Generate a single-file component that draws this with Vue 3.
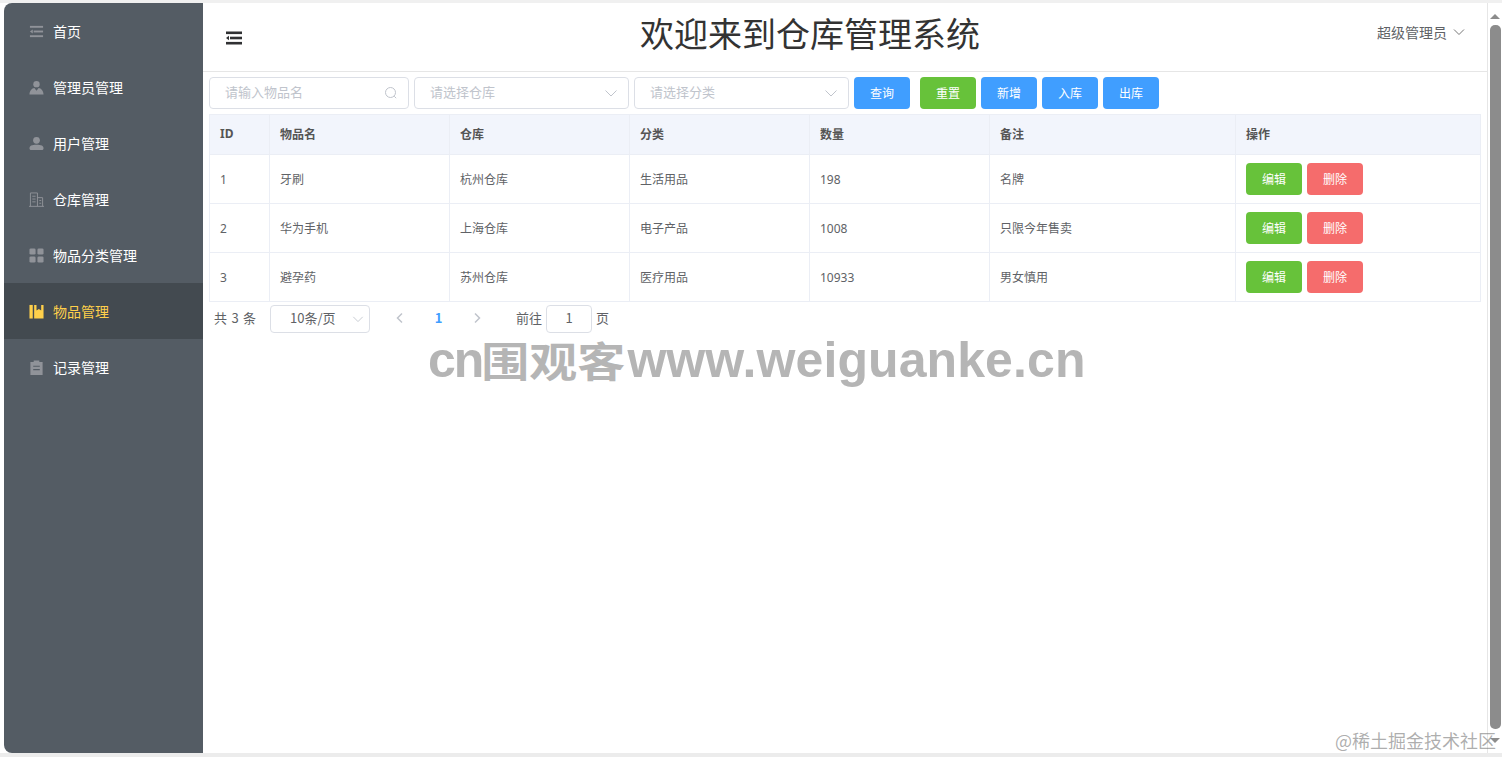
<script setup>
const menu = [
  { label: '首页', icon: 'fold' },
  { label: '管理员管理', icon: 'admin' },
  { label: '用户管理', icon: 'user' },
  { label: '仓库管理', icon: 'building' },
  { label: '物品分类管理', icon: 'grid' },
  { label: '物品管理', icon: 'goods', active: true },
  { label: '记录管理', icon: 'order' }
]
const columns = ['ID', '物品名', '仓库', '分类', '数量', '备注', '操作']
const rows = [
  [1, '牙刷', '杭州仓库', '生活用品', 198, '名牌'],
  [2, '华为手机', '上海仓库', '电子产品', 1008, '只限今年售卖'],
  [3, '避孕药', '苏州仓库', '医疗用品', 10933, '男女慎用']
]
const toolbar = [
  { text: '查询', cls: 'blue gap' },
  { text: '重置', cls: 'green' },
  { text: '新增', cls: 'blue' },
  { text: '入库', cls: 'blue' },
  { text: '出库', cls: 'blue' }
]
</script>

<template>
  <div class="page">
    <div class="window">
      <aside class="side">
        <div v-for="m in menu" :key="m.label" class="item" :class="{ active: m.active }">
          <svg class="ic" viewBox="0 0 16 16" fill="currentColor">
            <template v-if="m.icon === 'fold'">
              <rect x="1" y="2" width="14" height="2" />
              <rect x="5" y="7" width="10" height="2" />
              <rect x="1" y="12" width="14" height="2" />
              <path d="M1 8l3-2.200v4.400z" />
            </template>
            <template v-else-if="m.icon === 'admin'">
              <circle cx="8" cy="4.400" r="3.400" />
              <path d="M.5 15.500c0-3.600 2.600-6.700 5.200-6.900L8 11.500l2.300-2.900c2.600.2 5.200 3.300 5.200 6.900z" />
            </template>
            <template v-else-if="m.icon === 'user'">
              <circle cx="8" cy="4.600" r="3.600" />
              <path d="M.5 13c0-2.600 2.400-3.800 7.500-3.800s7.500 1.200 7.500 3.800c0 1.400-.8 2-2 2H2.500c-1.200 0-2-.6-2-2z" />
            </template>
            <template v-else-if="m.icon === 'building'">
              <path fill="none" stroke="currentColor" stroke-width="1" d="M0 15.300h16M1.500 15.300V1h7.500v14.300M9 6h5.500v9.300M3.500 4.500h3.500M3.500 7.500h3.500M3.500 10.500h3.500M11 9h2M11 12h2" />
            </template>
            <template v-else-if="m.icon === 'grid'">
              <rect x="0.500" y="0.500" width="6.500" height="6.500" rx="1.400" />
              <rect x="9" y="0.500" width="6.500" height="6.500" rx="1.400" />
              <rect x="0.500" y="9" width="6.500" height="6.500" rx="1.400" />
              <rect x="9" y="9" width="6.500" height="6.500" rx="1.400" />
            </template>
            <template v-else-if="m.icon === 'goods'">
              <rect x="0.500" y="1" width="3.500" height="14.500" />
              <path d="M5.500 1H8v6l2.500-1.800L13 7V1h2.500v14.500h-10z" />
            </template>
            <template v-else>
              <path fill-rule="evenodd" d="M5 0.500h6v1.500h3.500v14h-13V2H5zM4.500 6v1.300h7V6zM4.500 9.500v1.300h7V9.500z" />
            </template>
          </svg>
          <span>{{ m.label }}</span>
        </div>
      </aside>

      <main class="main">
        <header class="head">
          <svg class="fold" viewBox="0 0 16 14" fill="currentColor">
            <rect x="0" y="0.500" width="16" height="2.600" />
            <rect x="4" y="5.700" width="12" height="2.600" />
            <rect x="0" y="10.900" width="16" height="2.600" />
            <path d="M0 7l3-2.200v4.400z" />
          </svg>
          <h1 class="title">欢迎来到仓库管理系统</h1>
          <div class="userbox">
            <span>超级管理员</span>
            <svg class="chev" viewBox="0 0 12 12" fill="none" stroke="currentColor"><path d="M1 3.500l5 5 5-5" /></svg>
          </div>
        </header>

        <section class="body">
          <div class="tools">
            <div class="field w200">
              <span class="ph">请输入物品名</span>
              <svg class="sfx" viewBox="0 0 14 14" fill="none" stroke="currentColor"><circle cx="6.500" cy="6.500" r="5" /><path d="M10.200 10.200l2 2" /></svg>
            </div>
            <div class="field w215">
              <span class="ph">请选择仓库</span>
              <svg class="sfx" viewBox="0 0 14 14" fill="none" stroke="currentColor"><path d="M1.500 4.500l5.500 5.500 5.500-5.500" /></svg>
            </div>
            <div class="field w215">
              <span class="ph">请选择分类</span>
              <svg class="sfx" viewBox="0 0 14 14" fill="none" stroke="currentColor"><path d="M1.500 4.500l5.500 5.500 5.500-5.500" /></svg>
            </div>
            <button v-for="b in toolbar" :key="b.text" class="btn" :class="b.cls">{{ b.text }}</button>
          </div>

          <table class="tbl">
            <colgroup>
              <col class="c60" /><col class="c180" /><col class="c180" /><col class="c180" /><col class="c180" /><col class="c246" /><col />
            </colgroup>
            <thead>
              <tr><th v-for="c in columns" :key="c">{{ c }}</th></tr>
            </thead>
            <tbody>
              <tr v-for="r in rows" :key="r[0]">
                <td v-for="(v, i) in r" :key="i">{{ v }}</td>
                <td>
                  <div class="ops">
                    <button class="btn green">编辑</button>
                    <button class="btn red">删除</button>
                  </div>
                </td>
              </tr>
            </tbody>
          </table>

          <div class="pager">
            <span class="total">共 3 条</span>
            <div class="size">
              <span>10条/页</span>
              <svg class="sfx small" viewBox="0 0 14 14" fill="none" stroke="currentColor"><path d="M1.500 4.500l5.500 5.500 5.500-5.500" /></svg>
            </div>
            <svg class="arrow prev" viewBox="0 0 10 12" fill="none" stroke="currentColor" stroke-width="1.500"><path d="M7 1.500L2.500 6 7 10.500" /></svg>
            <span class="num">1</span>
            <svg class="arrow next" viewBox="0 0 10 12" fill="none" stroke="currentColor" stroke-width="1.500"><path d="M3 1.500L7.500 6 3 10.500" /></svg>
            <span class="goto">前往</span>
            <div class="jump">1</div>
            <span class="goto2">页</span>
          </div>
        </section>

        <div class="mark"><span class="m1 m0">cn</span><span class="m2">围观客</span><span class="m1">www.weiguanke.cn</span></div>
      </main>

      <div class="scroll">
        <i class="up"></i>
        <div class="thumb"></div>
        <i class="down"></i>
      </div>
    </div>
    <div class="juejin">@稀土掘金技术社区</div>
  </div>
</template>

<style>
html, body { margin: 0; background: #fff; overflow: hidden; }
</style>

<style scoped>
.page {
  position: relative;
  height: 757px;
  box-sizing: border-box;
  padding: 3px 1px 4px 4px;
  background: linear-gradient(#f0f0f0 0 3px, #fff 3px 753px, #ececec 753px);
  font-family: "Noto Sans CJK SC", "Liberation Sans", sans-serif;
  color: #606266;
}
.window { display: flex; height: 750px; background: #fff; border-radius: 8px 0 8px 8px; overflow: hidden; }
.side { width: 199px; flex: none; background: #545c64; }
.item {
  height: 56px;
  display: flex;
  align-items: center;
  padding-left: 25px;
  gap: 9px;
  font-size: 14px;
  color: #fff;
}
.item .ic { width: 15px; height: 15px; color: #909399; flex: none; }
.item.active { background: #434a50; color: #ffd04b; }
.item.active .ic { color: #ffd04b; }

.main { position: relative; width: 1284px; flex: none; display: flex; flex-direction: column; }
.head {
  height: 68px;
  flex: none;
  border-bottom: 1px solid #e6e6e6;
  display: flex;
  align-items: center;
}
.fold { width: 16px; height: 14px; margin: 2px 0 0 23px; color: #303133; flex: none; }
.title { margin: 0 0 7px 398px; font-size: 34px; font-weight: 400; line-height: 1.2; color: #333; white-space: nowrap; }
.userbox { display: flex; align-items: center; gap: 6px; font-size: 14px; margin: 0 22px 10px auto; color: #606266; line-height: 20px; }
.chev { width: 12px; height: 12px; color: #777; }

.body { padding: 5px 6px 0 6px; flex: 1; }
.tools { display: flex; gap: 5px; height: 32px; }
.field {
  height: 32px;
  box-sizing: border-box;
  border: 1px solid #dcdfe6;
  border-radius: 4px;
  padding: 0 10px 0 15px;
  display: flex;
  align-items: center;
  justify-content: space-between;
  flex: none;
}
.w200 { width: 200px; }
.w215 { width: 215px; }
.ph { font-size: 13px; color: #c0c4cc; line-height: 18px; margin-top: -3px; }
.sfx { width: 14px; height: 14px; color: #c0c4cc; }
.sfx.small { width: 12px; height: 12px; }
.btn {
  width: 56px;
  height: 32px;
  padding: 0 0 2px;
  border: 0;
  border-radius: 4px;
  color: #fff;
  font-size: 12px;
  font-family: inherit;
  flex: none;
}
.blue { background: #409eff; }
.green { background: #67c23a; }
.red { background: #f56c6c; }
.gap { margin-right: 5px; }

.tbl {
  width: 1272px;
  margin-top: 5px;
  table-layout: fixed;
  border-collapse: collapse;
  font-size: 12px;
  font-family: "Noto Sans", "Noto Sans CJK SC", sans-serif;
  border: 1px solid #ebeef5;
}
.c60 { width: 60px; }
.c180 { width: 180px; }
.c246 { width: 246px; }
th, td { border: 1px solid #ebeef5; padding: 0 10px; text-align: left; }
th { height: 37px; padding-bottom: 2px; background: #f2f5fc; font-weight: 700; color: #555; }
td { height: 48px; color: #606266; }
.ops { display: flex; gap: 5px; }
.ops .btn { display: block; font-family: "Noto Sans CJK SC", sans-serif; }

.pager { display: flex; align-items: center; height: 28px; margin-top: 3px; font-size: 13px; }
.pager > span, .size > span, .jump { line-height: 18px; padding-bottom: 3px; }
.total { margin-left: 5px; width: 56px; word-spacing: 1.500px; }
.size {
  width: 100px;
  height: 28px;
  box-sizing: border-box;
  border: 1px solid #dcdfe6;
  border-radius: 4px;
  display: flex;
  align-items: center;
  justify-content: space-between;
  padding: 0 5px 0 19px;
}
.arrow { width: 10px; height: 12px; color: #c0c4cc; flex: none; margin-bottom: 2px; }
.prev { margin-left: 25px; }
.num { width: 13px; margin-left: 27px; color: #409eff; font-weight: 700; text-align: center; }
.next { margin-left: 27px; }
.goto { margin-left: 34px; }
.jump {
  width: 46px;
  height: 28px;
  margin: 0 4px;
  box-sizing: border-box;
  border: 1px solid #dcdfe6;
  border-radius: 4px;
  display: flex;
  align-items: center;
  justify-content: center;
}

.mark {
  position: absolute;
  left: 225px;
  top: 318px;
  display: flex;
  align-items: baseline;
  color: #b5b5b5;
  white-space: nowrap;
  font-weight: 700;
  line-height: 70px;
}
.m1 { font-family: "Liberation Sans", sans-serif; font-size: 50px; letter-spacing: 0.1px; }
.m0 { letter-spacing: -2px; }
.m2 {
  display: inline-block;
  font-family: "Noto Sans CJK SC", sans-serif;
  font-size: 48px;
  margin: 0 2px 0 -1px;
  transform: scaleY(0.86);
  transform-origin: 50% 75%;
}

.scroll {
  position: relative;
  flex: 1;
  min-width: 0;
  border-left: 1px solid #e6e6e6;
}
.thumb {
  position: absolute;
  left: 2px;
  right: 0;
  top: 22px;
  height: 704px;
  border-radius: 5px;
  background: #8c8c8c;
}
.up, .down { position: absolute; left: 2px; width: 0; height: 0; border-left: 5px solid transparent; border-right: 5px solid transparent; }
.up { top: 11px; border-bottom: 5px solid #8c8c8c; }
.down { top: 735px; border-top: 5px solid #8c8c8c; }

.juejin {
  position: absolute;
  right: 6px;
  top: 729px;
  font-size: 18px;
  line-height: 22px;
  color: rgba(120, 120, 120, 0.6);
  font-family: "Noto Sans CJK SC", sans-serif;
}
</style>
